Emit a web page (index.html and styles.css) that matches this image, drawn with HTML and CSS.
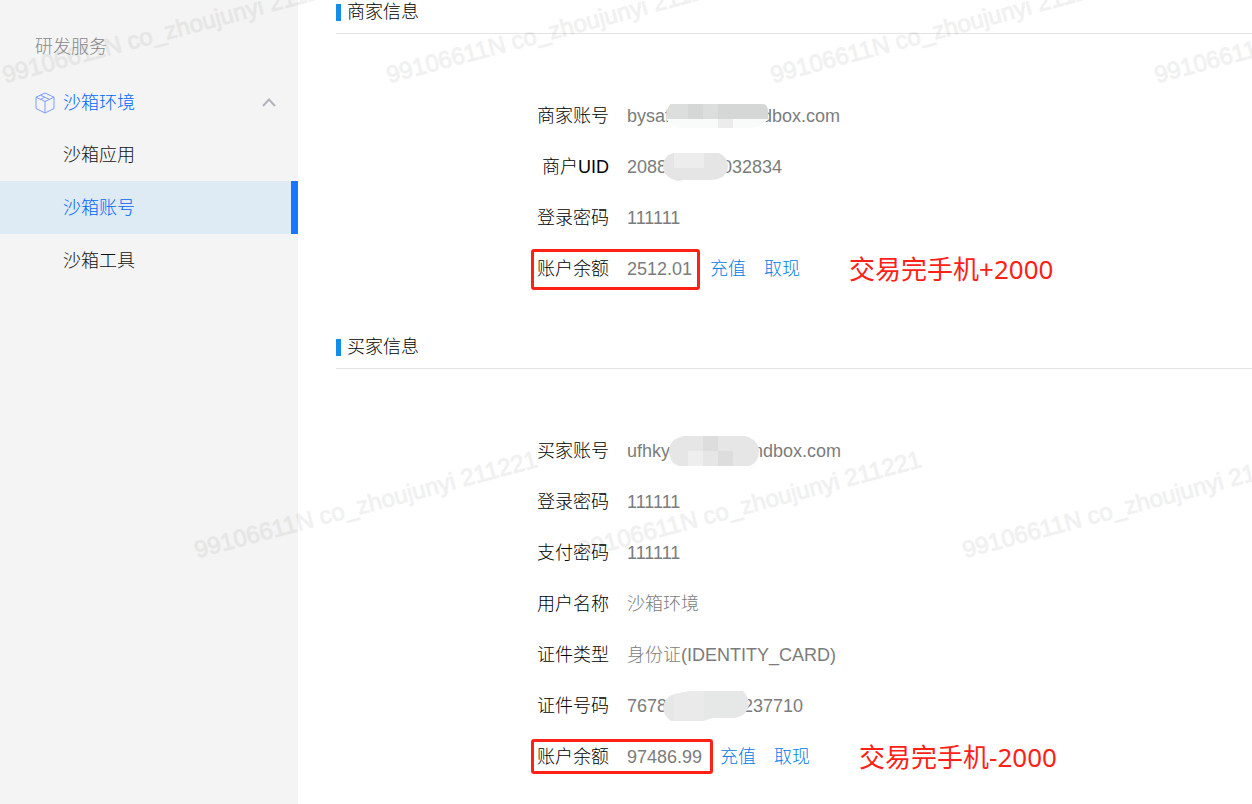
FILE: index.html
```
<!DOCTYPE html>
<html lang="zh-CN">
<head>
    <meta charset="UTF-8">
    <meta name="viewport" content="width=device-width, initial-scale=1.0">
    <title>沙箱账号</title>
    <link rel="stylesheet" href="styles.css">
</head>
<body>
    <div class="page">
        <nav class="sidebar">
            <h2 class="sidebar-title">研发服务</h2>
            <button type="button" class="menu-toggle" aria-expanded="true">
                <svg class="icon-box" viewBox="0 0 20 22" aria-hidden="true">
                    <path d="M10 1 L19 5.2 V16.5 L10 21 L1 16.5 V5.2 Z M1 5.2 L10 9.5 L19 5.2 M10 9.5 V21 M5.5 3.2 L14.5 7.4 M5.5 7.4 L10 5.2"/>
                </svg>
                <span>沙箱环境</span>
                <svg class="icon-arrow" viewBox="0 0 14 9" aria-hidden="true">
                    <path d="M1 8 L7 1.5 L13 8"/>
                </svg>
            </button>
            <ul class="menu">
                <li><a href="#">沙箱应用</a></li>
                <li><a href="#" class="active">沙箱账号</a></li>
                <li><a href="#">沙箱工具</a></li>
            </ul>
        </nav>

        <main class="content">
            <section>
                <h3 class="section-title">商家信息</h3>
                <dl class="info">
                    <div class="row">
                        <dt>商家账号</dt>
                        <dd>
                            <span>bysaf</span>
                            <svg class="mask" width="102" height="24" viewBox="0 0 102 24" aria-hidden="true">
                                <path fill="#d5d6d6" d="M5 0 H97 Q102 0 102 8 V15 H0 Q0 4 5 0 Z"/>
                                <path fill="#dcdddd" d="M5 0 H22 V15 H0 Q0 4 5 0 Z M37 0 H52 V15 H37 Z"/>
                                <path fill="#f9fafa" d="M0 15 H102 Q96 24 86 24 H18 Q6 24 0 15 Z"/>
                                <path fill="#ececec" d="M52 15 H67 V24 H52 Z"/>
                            </svg>
                            <span>dbox.com</span>
                        </dd>
                    </div>
                    <div class="row">
                        <dt>商户UID</dt>
                        <dd>
                            <span>2088</span>
                            <svg class="mask" width="65" height="28" viewBox="0 0 65 28" aria-hidden="true">
                                <path fill="#e5e5e5" d="M10 0 H56 Q65 4 65 13 Q65 26 48 27 H22 L15 28 Q0 24 0 14 Q0 3 10 0 Z"/>
                                <path fill="#ededed" d="M11 0 H41 V15 H11 Z"/>
                            </svg>
                            <span>032834</span>
                        </dd>
                    </div>
                    <div class="row">
                        <dt>登录密码</dt>
                        <dd>111111</dd>
                    </div>
                    <div class="row">
                        <dt>账户余额</dt>
                        <dd>
                            <span class="amount">2512.01</span>
                            <a href="#">充值</a>
                            <a href="#">取现</a>
                            <strong class="note">交易完手机+2000</strong>
                        </dd>
                    </div>
                </dl>
            </section>

            <section>
                <h3 class="section-title">买家信息</h3>
                <dl class="info">
                    <div class="row">
                        <dt>买家账号</dt>
                        <dd>
                            <span>ufhky</span>
                            <svg class="mask" width="93" height="30" viewBox="0 0 93 30" aria-hidden="true">
                                <path fill="#e6e6e6" d="M18 0 H79 Q93 4 93 15 Q93 27 83 30 H13 Q3 27 3 15 Q3 3 18 0 Z"/>
                                <path fill="#dddddd" d="M37 0 H52 V15 H37 Z M52 15 H67 V30 H52 Z"/>
                                <path fill="#eeeeee" d="M22 15 H37 V30 H22 Z"/>
                            </svg>
                            <span>ndbox.com</span>
                        </dd>
                    </div>
                    <div class="row">
                        <dt>登录密码</dt>
                        <dd>111111</dd>
                    </div>
                    <div class="row">
                        <dt>支付密码</dt>
                        <dd>111111</dd>
                    </div>
                    <div class="row">
                        <dt>用户名称</dt>
                        <dd>沙箱环境</dd>
                    </div>
                    <div class="row">
                        <dt>证件类型</dt>
                        <dd>身份证(IDENTITY_CARD)</dd>
                    </div>
                    <div class="row">
                        <dt>证件号码</dt>
                        <dd>
                            <span>7678</span>
                            <svg class="mask" width="86" height="30" viewBox="0 0 86 30" aria-hidden="true">
                                <path fill="#e6e7e7" d="M12 3 L28 0 H80 Q86 6 86 14 Q84 25 72 27 H50 L40 30 H8 Q0 24 0 16 Q2 5 12 3 Z"/>
                                <path fill="#eaeaea" d="M11 3 L28 0 H41 V29 H11 Z"/>
                            </svg>
                            <span>237710</span>
                        </dd>
                    </div>
                    <div class="row">
                        <dt>账户余额</dt>
                        <dd>
                            <span class="amount amount-slim">97486.99</span>
                            <a href="#">充值</a>
                            <a href="#">取现</a>
                            <strong class="note">交易完手机-2000</strong>
                        </dd>
                    </div>
                </dl>
            </section>
        </main>

        <div class="watermark" aria-hidden="true">
            <div class="watermark-row">
                <span>99106611N co_zhoujunyi 211221</span>
                <span>99106611N co_zhoujunyi 211221</span>
                <span>99106611N co_zhoujunyi 211221</span>
                <span>99106611N co_zhoujunyi 211221</span>
            </div>
            <div class="watermark-row shifted">
                <span>99106611N co_zhoujunyi 211221</span>
                <span>99106611N co_zhoujunyi 211221</span>
                <span>99106611N co_zhoujunyi 211221</span>
            </div>
        </div>
    </div>
</body>
</html>
```
FILE: styles.css
```
* {
    box-sizing: border-box;
}
body {
    margin: 0;
    font-family: "Liberation Sans", "Noto Sans CJK SC", sans-serif;
    font-size: 18px;
    font-weight: 300;
    line-height: 24px;
    color: #000;
    background-color: #fff;
}
h2, h3, ul, dl, dd {
    margin: 0;
    padding: 0;
    font-size: 18px;
    font-weight: 300;
}
a {
    color: #0080e6;
    text-decoration: none;
}
.page {
    position: relative;
    display: flex;
    min-height: 100vh;
    overflow: hidden;
}

/* Side menu */
.sidebar {
    flex: 0 0 298px;
    background-color: #f4f4f4;
}
.sidebar-title {
    padding: 35px 35px 18px;
    color: #888;
}
.menu-toggle {
    display: flex;
    align-items: center;
    gap: 8px;
    width: 100%;
    height: 51px;
    padding: 0 22px 0 35px;
    border: none;
    background: none;
    font: inherit;
    color: #0066ff;
    cursor: pointer;
}
.icon-box {
    width: 20px;
    height: 22px;
    fill: none;
    stroke: #7c9cff;
}
.icon-arrow {
    width: 14px;
    height: 9px;
    margin-left: auto;
    fill: none;
    stroke: #b4b4c0;
    stroke-width: 2;
}
.menu {
    list-style: none;
}
.menu a {
    display: flex;
    align-items: center;
    height: 53px;
    padding-left: 63px;
    color: #111;
}
.menu a.active {
    color: #0066ff;
    background-color: #deeaf4;
    border-right: 7px solid #1677ff;
}

.content {
    flex: 1;
    min-width: 0;
    padding-left: 38px;
}
.section-title {
    display: flex;
    align-items: center;
    gap: 6px;
    padding-bottom: 9px;
    border-bottom: 1px solid #e4e4e4;
}
.section-title::before {
    content: "";
    width: 5px;
    height: 17px;
    background-color: #108ee9;
}
.info {
    padding: 56px 0 41px;
}
section:last-child .info {
    padding-bottom: 0;
}
.row {
    display: flex;
    align-items: center;
    gap: 18px;
    height: 51px;
}
.row dt {
    flex: 0 0 273px;
    text-align: right;
}
.row dd {
    display: flex;
    align-items: center;
    color: #7c7c7c;
    white-space: nowrap;
}
.row a {
    margin-left: 18px;
}
.mask {
    margin: 0 -6px 0 -4px;
    z-index: 1;
}

/* red frame round the label and the amount */
.amount {
    position: relative;
}
.amount::before {
    content: "";
    position: absolute;
    top: -8px;
    bottom: -9px;
    left: -96px;
    right: -8px;
    border: 3px solid #ff2116;
    border-radius: 3px;
}
.amount-slim::before {
    top: -6px;
    bottom: -5px;
    right: -11px;
}
.note {
    margin-left: 49px;
    font-family: "Noto Sans", "Noto Sans CJK SC", sans-serif;
    font-size: 26px;
    font-weight: 400;
    color: #ff2116;
}

.watermark {
    position: absolute;
    inset: 0;
    overflow: hidden;
    pointer-events: none;
}
.watermark-row {
    display: flex;
    height: 475px;
    padding: 63px 0 0 6px;
}
.watermark-row.shifted {
    padding-left: 198px;
}
.watermark-row span {
    flex: 0 0 384px;
    height: 24px;
    font-size: 24px;
    font-weight: 400;
    color: #000;
    -webkit-text-stroke: 1px #000;
    opacity: 0.05;
    white-space: nowrap;
    transform: rotate(-15deg);
    transform-origin: left bottom;
}
```
